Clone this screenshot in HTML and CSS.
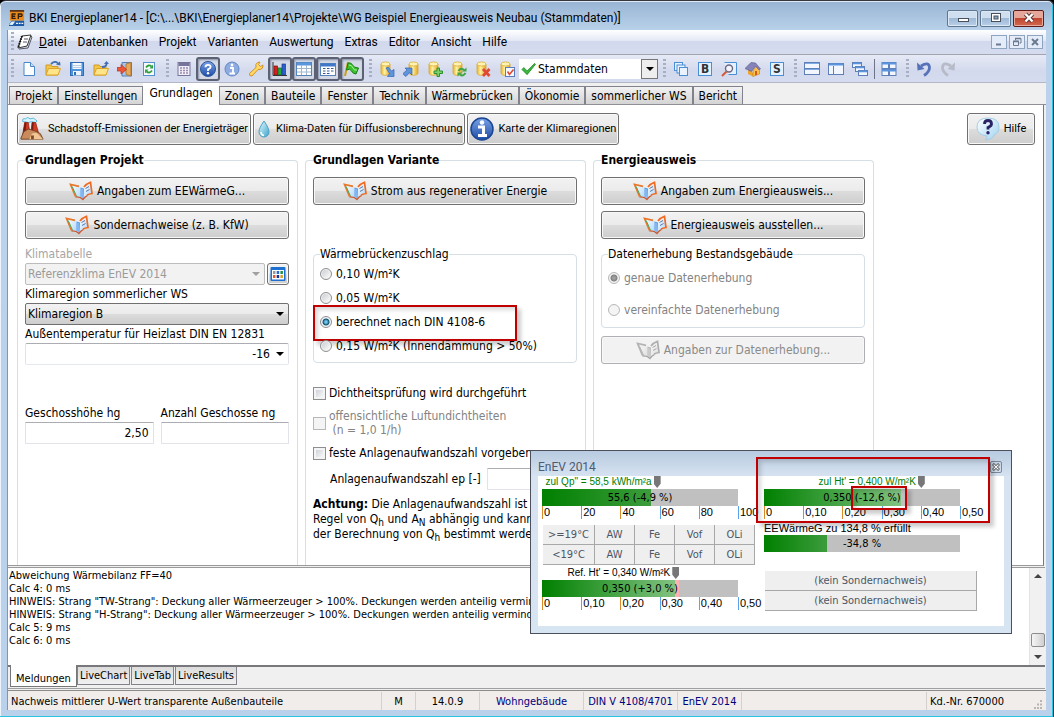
FILE: index.html
```html
<!DOCTYPE html>
<html lang="de">
<head>
<meta charset="utf-8">
<title>BKI Energieplaner14</title>
<link rel="stylesheet" href="styles.css">
</head>
<body>
<svg class="defs" aria-hidden="true">
  <defs>
    <linearGradient id="gBlue" x1="0" y1="0" x2="0" y2="1"><stop offset="0" stop-color="#7ba3e6"/><stop offset="1" stop-color="#1c4ba6"/></linearGradient>
    <linearGradient id="gYel" x1="0" y1="0" x2="1" y2="0"><stop offset="0" stop-color="#e8b530"/><stop offset=".4" stop-color="#fff0a0"/><stop offset="1" stop-color="#e2a520"/></linearGradient>
    <linearGradient id="gDrop" x1="0" y1="0" x2="1" y2="1"><stop offset="0" stop-color="#e8fbff"/><stop offset="1" stop-color="#3aa5cc"/></linearGradient>
    <linearGradient id="gBub" x1="0" y1="0" x2="1" y2="1"><stop offset="0" stop-color="#ffffff"/><stop offset="1" stop-color="#9fd4f2"/></linearGradient>
    <linearGradient id="gPage" x1="0" y1="0" x2="1" y2="1"><stop offset="0" stop-color="#ffffff"/><stop offset="1" stop-color="#a9d4fb"/></linearGradient>
  </defs>
  <symbol id="book" viewBox="0 0 24 20">
    <path d="M1.500 3.500 L10 5.500 Q12 6 12 8 L13 17.500 Q10 15 6.500 15.500 Z" fill="url(#gPage)"/>
    <path d="M6.500 15.500 L1.500 3.500 L10 5.300" fill="none" stroke="#e8772a" stroke-width="1.700"/>
    <path d="M3.200 5.500 L7.400 15" stroke="#4aa857" stroke-width="1"/>
    <path d="M14 8 Q15.500 3.500 21 1.500 L23 12.500 Q17.500 12.500 14 17.500 Z" fill="url(#gPage)"/>
    <path d="M15 6 Q17 3 21.500 1.300 L23 12.500 Q20 13 18 14" fill="none" stroke="#f2691e" stroke-width="1.700"/>
    <path d="M11.500 6.500 L15 7.500 L14.500 18 L11.500 15.500 Z" fill="#5f9fe8"/>
    <path d="M13 8 V17" stroke="#b9dafc" stroke-width=".8"/>
    <path d="M6.500 16 Q11 15.500 14 18.500 Q16 15.500 18.500 14.500" fill="none" stroke="#c9552a" stroke-width="1.300"/>
    <path d="M16.500 7.500 L20 5.500 M17 10.500 L20.500 8.500" stroke="#4a6a9a" stroke-width=".9"/>
  </symbol>
  <symbol id="db" viewBox="0 0 16 16">
    <path d="M2 3 V12 C2 15 11 15 11 12 V3 Z" fill="url(#gYel)" stroke="#d9a62b" stroke-width=".8"/>
    <ellipse cx="6.500" cy="3" rx="4.500" ry="2" fill="#fff3b4" stroke="#dcae3a" stroke-width=".8"/>
  </symbol>
  <symbol id="folder" viewBox="0 0 16 16">
    <path d="M1 14 V4 H6 L7 5.500 H13 V14 Z" fill="#f3c64a" stroke="#cf9a25"/>
    <path d="M1 14 L3.500 7.500 H15.500 L13 14 Z" fill="#ffe48a" stroke="#dba52c"/>
  </symbol>
</svg>

<div class="window">
  <header class="titlebar">
    <svg class="app-icon" viewBox="0 0 18 18" aria-hidden="true"><rect x="1" y="0" width="16" height="12" rx="1" fill="#e88a1e"/><rect x="1" y="0" width="16" height="2" fill="#5a3216"/><path d="M3.500 4.500h4M3.500 3.800v6.400M3.500 7h3.500M3.500 9.500h4M10.500 10.200V4.500h3.500q1.500 1.300 0 2.700H10.500" stroke="#301c10" stroke-width="1.500" fill="none"/><path d="M0 16 L3 12 H17 V18 H0Z" fill="#1c59a8"/><path d="M0 16.500L3 13H7L4 17Z" fill="#e8f2fc"/><path d="M8 15h2M11 15h2M14 15h2" stroke="#fff" stroke-width="1.500"/></svg>
    <h1 class="title">BKI Energieplaner14 - [C:\...\BKI\Energieplaner14\Projekte\WG Beispiel Energieausweis Neubau (Stammdaten)]</h1>
    <div class="win-buttons">
      <button class="win-btn" aria-label="Minimieren"><svg viewBox="0 0 14 12"><rect x="2.500" y="6.500" width="10" height="3" fill="#fff" stroke="#47505c"/></svg></button>
      <button class="win-btn" aria-label="Maximieren"><svg viewBox="0 0 14 12"><rect x="2.500" y="1.500" width="9" height="8" fill="#fff" stroke="#47505c"/><rect x="5" y="4" width="4" height="3" fill="#8ba5c5" stroke="#47505c"/></svg></button>
      <button class="win-btn win-close" aria-label="Schließen"><svg viewBox="0 0 14 12"><path d="M3.500 2 L10.500 9.500 M10.500 2 L3.500 9.500" stroke="#5c3434" stroke-width="4.200"/><path d="M3.500 2 L10.500 9.500 M10.500 2 L3.500 9.500" stroke="#fff" stroke-width="2.400"/></svg></button>
    </div>
  </header>

  <div class="client">
    <nav class="menubar" aria-label="Menü">
      <span class="grip"></span>
      <svg class="menu-icon" viewBox="0 0 16 16" aria-hidden="true"><path d="M5 2 L14 1 L10 12 L1 14Z" fill="#fff" stroke="#333"/><path d="M5 2 L1 14" stroke="#111" stroke-width="2" stroke-dasharray="1.500 1"/><path d="M7 5h4M6 8h4M14 2l1 1-4 11-9 1" stroke="#556" fill="none"/></svg>
      <button class="menu"><u>D</u>atei</button>
      <button class="menu">Datenbanken</button>
      <button class="menu">Projekt</button>
      <button class="menu">Varianten</button>
      <button class="menu">Auswertung</button>
      <button class="menu">Extras</button>
      <button class="menu">Editor</button>
      <button class="menu">Ansicht</button>
      <button class="menu">Hilfe</button>
      <span class="mdi">
        <button class="mdi-btn" aria-label="Fenster minimieren"><svg viewBox="0 0 10 10"><path d="M2 7.500h5" stroke="#6b7a90" stroke-width="2"/></svg></button>
        <button class="mdi-btn" aria-label="Fenster wiederherstellen"><svg viewBox="0 0 10 10"><path d="M3.500 3V1.500H9V6H7.500M1.500 4h5v4.500h-5z" fill="none" stroke="#6b7a90"/><path d="M3 1.500h6M1 4.500h6" stroke="#6b7a90" stroke-width="1.500"/></svg></button>
        <button class="mdi-btn" aria-label="Fenster schließen"><svg viewBox="0 0 10 10"><path d="M2 2l6 6M8 2L2 8" stroke="#6b7a90" stroke-width="2"/></svg></button>
      </span>
    </nav>

    <div class="toolbar" role="toolbar" aria-label="Werkzeuge">
      <span class="grip"></span>
      <button class="tool" aria-label="Neu"><svg viewBox="0 0 16 16"><path d="M3 1.500H9.500L13.500 5.500V14.500H3Z" fill="#fbfdff" stroke="#4a86c8"/><path d="M9.500 1.500V5.500H13.500" fill="#cfe2f6" stroke="#4a86c8"/></svg></button>
      <button class="tool" aria-label="Öffnen"><svg viewBox="0 0 16 16"><use href="#folder"/><path d="M6 3Q10-1 13 2.500" stroke="#3f6fae" stroke-width="1.800" fill="none"/><path d="M11 3.500L15.500 4.500 15 .500Z" fill="#3f6fae"/></svg></button>
      <button class="tool" aria-label="Speichern"><svg viewBox="0 0 16 16"><rect x="1.500" y="1.500" width="13" height="13" fill="#4d93dd" stroke="#2f6cb5"/><rect x="3.500" y="2" width="9" height="6" fill="#f6faff"/><path d="M4 4.500h8M4 6.500h8" stroke="#b9cde4"/><rect x="4" y="10" width="8" height="4.500" fill="#eef4fc"/><rect x="5" y="11" width="2" height="3" fill="#2f6cb5"/></svg></button>
      <button class="tool" aria-label="Schließen"><svg viewBox="0 0 16 16"><use href="#folder"/><path d="M9 6Q14 6 13.500 2" stroke="#3f6fae" stroke-width="1.800" fill="none"/><path d="M11 3L16 3 13.500 0Z" fill="#3f6fae"/></svg></button>
      <button class="tool" aria-label="Beenden"><svg viewBox="0 0 16 16"><path d="M5 1.500H14.500V15H5Z" fill="#a8c6e8" stroke="#5a80ae"/><path d="M9 3L14 1.500V15L9 13.500Z" fill="#e5a95a" stroke="#a8702d" stroke-width=".8"/><path d="M0 6.500H4V3.500L9.500 8.500 4 13V10H0Z" fill="#ee5638" stroke="#b82e1c" stroke-width=".7"/></svg></button>
      <button class="tool" aria-label="Aktualisieren"><svg viewBox="0 0 16 16"><rect x="2.500" y="1.500" width="11" height="13" fill="#f6faff" stroke="#5591cf"/><path d="M5 6.500Q7.500 3 10.500 5.500M11 9.500Q8.500 13 5.500 10.500" stroke="#32a03a" stroke-width="1.800" fill="none"/><path d="M12 3.500V7.500H8.500ZM4 12.500V8.500H7.500Z" fill="#32a03a"/></svg></button>
      <span class="grip"></span>
      <button class="tool" aria-label="Rechner"><svg viewBox="0 0 16 16"><rect x="2" y="1.500" width="12" height="13" fill="#f0eef8" stroke="#77749c"/><rect x="2.500" y="2" width="11" height="3" fill="#77749c"/><path d="M4 7h2M7 7h2M10 7h2M4 9.500h2M7 9.500h2M10 9.500h2M4 12h2M7 12h2M10 12h2" stroke="#9a8cae" stroke-width="1.500"/></svg></button>
      <button class="tool pressed" aria-label="Hilfe"><svg viewBox="0 0 16 16"><circle cx="8" cy="8" r="7.500" fill="url(#gBlue)" stroke="#2b569e"/><path d="M5.500 6.200Q5.500 3.800 8 3.800T10.600 6Q10.600 7.400 8 8.400V10" stroke="#fff" stroke-width="1.800" fill="none"/><circle cx="8" cy="12.200" r="1.200" fill="#fff"/></svg></button>
      <button class="tool" aria-label="Information"><svg viewBox="0 0 16 16"><circle cx="8" cy="8" r="7" fill="#8cabe0" stroke="#6587c4"/><path d="M6 7H9V12.500M5.500 12.500H11" stroke="#fff" stroke-width="1.800" fill="none"/><circle cx="8" cy="4" r="1.400" fill="#fff"/></svg></button>
      <button class="tool" aria-label="Optionen"><svg viewBox="0 0 16 16"><path d="M1.500 12.500L8 6.500Q7 3 9.500 1.500L12 1 10.500 3.500 12.500 5.500 15 4Q15.500 8 12 8.500L10 8.500 4 15Q1 15.500 1.500 12.500Z" fill="#ffd964" stroke="#d2922a"/></svg></button>
      <button class="tool pressed" aria-label="Diagramm"><svg viewBox="0 0 16 16"><rect x="2" y="5" width="3.500" height="9" fill="#d32020" stroke="#7e0d0d" stroke-width=".7"/><rect x="6" y="7" width="3.500" height="7" fill="#27a63a" stroke="#11611c" stroke-width=".7"/><rect x="10" y="3" width="3.500" height="11" fill="#2b5fd0" stroke="#173a8c" stroke-width=".7"/><path d="M1 1V14.500H15" stroke="#333" fill="none"/></svg></button>
      <button class="tool pressed" aria-label="Tabelle"><svg viewBox="0 0 16 16"><rect x=".5" y="1.500" width="15" height="13" fill="#fff" stroke="#5582b8"/><path d="M1 3h14" stroke="#5a96dc" stroke-width="3"/><path d="M1 7.500H15M1 11H15M5.500 4V14M10.500 4V14" stroke="#9fb6d0"/></svg></button>
      <button class="tool pressed" aria-label="Ergebnisse"><svg viewBox="0 0 16 16"><rect x=".5" y="2.500" width="15" height="12" fill="#fff" stroke="#5582b8"/><path d="M1 4h14" stroke="#3f78c8" stroke-width="3"/><path d="M3 7.500h2.500M7 7.500h2.500M11 7.500h2.500M3 10h2.500M7 10h2.500M11 10h2.500M3 12.500h2.500M7 12.500h2.500" stroke="#35588c"/></svg></button>
      <button class="tool pressed" aria-label="Markierung"><svg viewBox="0 0 16 16"><path d="M1 15L4 1" stroke="#c9a01c" stroke-width="2"/><path d="M4 2Q7 1 8.500 4T14.500 7L12 13Q9 13 7.500 10T2.500 9Z" fill="#3cc02c" stroke="#157c12"/><path d="M5 4Q8 4 9 7T13 9" stroke="#a6f09a" fill="none"/></svg></button>
      <span class="grip"></span>
      <button class="tool" aria-label="Datenbank exportieren"><svg viewBox="0 0 16 16"><use href="#db"/><path d="M7 7L9 6 12.500 10 15 8.500V15.500H8.500L10.500 12.500Z" fill="#5f93dc" stroke="#3366b0" stroke-width=".7"/></svg></button>
      <button class="tool" aria-label="Datenbank importieren"><svg viewBox="0 0 16 16"><use href="#db" x="4"/><path d="M1 14L0 12.500 4 9 2 7H9V14L6.500 11.500 3 15.500Z" fill="#5f93dc" stroke="#3366b0" stroke-width=".7"/></svg></button>
      <button class="tool" aria-label="Datensatz hinzufügen"><svg viewBox="0 0 16 16"><use href="#db"/><path d="M10 7h2.500v3h3v2.500h-3v3H10v-3H7V10h3Z" fill="#7cd06a" stroke="#2c9030"/></svg></button>
      <button class="tool" aria-label="Datensatz aktualisieren"><svg viewBox="0 0 16 16"><use href="#db"/><path d="M7.500 10Q10 6 13 9M14.500 12Q12 16 9 13.500" stroke="#3ca544" stroke-width="2" fill="none"/><path d="M15.500 6.500V10.500H11ZM6.500 15.500V11.500H11Z" fill="#3ca544"/></svg></button>
      <button class="tool" aria-label="Datensatz löschen"><svg viewBox="0 0 16 16"><use href="#db"/><path d="M8 8l6.500 7M14.500 8L8 15" stroke="#e04a34" stroke-width="2.800"/></svg></button>
      <button class="tool" aria-label="Datensatz prüfen"><svg viewBox="0 0 16 16"><use href="#db"/><rect x="6.500" y="6.500" width="9" height="9" fill="#f6f8ff" stroke="#5a7cbc"/><path d="M8.500 10.500l2 3 4-5" stroke="#e04a34" stroke-width="1.600" fill="none"/></svg></button>
      <div class="combo">
        <svg viewBox="0 0 16 14" aria-hidden="true"><path d="M1 7.500L3 5.500 6.500 9 14.500 1 15.500 2 6.500 13Z" fill="#3cb83c" stroke="#14801c" stroke-width=".8"/></svg>
        <select aria-label="Variante"><option>Stammdaten</option></select>
        <span class="combo-arrow"></span>
      </div>
      <span class="grip"></span>
      <button class="tool" aria-label="Kopieren"><svg viewBox="0 0 16 16"><g fill="#e8f3ff" stroke="#4a8fd6"><rect x="1.500" y="1.500" width="8" height="8"/><rect x="4" y="4" width="8" height="8"/><rect x="6.500" y="6.500" width="8" height="8"/></g></svg></button>
      <button class="tool letter" aria-label="Bauteile">B</button>
      <button class="tool" aria-label="Suchen"><svg viewBox="0 0 16 16"><path d="M3.500 1.500h12v12h-8" fill="#e4f2ff" stroke="#4a8fd6"/><circle cx="8" cy="7.500" r="3.500" fill="#f4f4fa" stroke="#6b6880" stroke-width="1.400"/><path d="M5.500 10.500L1 15" stroke="#d4583a" stroke-width="2"/></svg></button>
      <button class="tool" aria-label="Gebäude"><svg viewBox="0 0 16 16"><path d="M3 8L8 12V15.500L3 13Z" fill="#f0a428"/><path d="M8 10L11 5.500 14.500 8V13L8 15.500Z" fill="#ffc04a" stroke="#b87a20" stroke-width=".6"/><path d="M0 7.500L6 1.500 10.500 2 15.500 8 13.500 8.500 10.500 5 6.500 10.500Z" fill="#8583b8" stroke="#57557f" stroke-width=".6"/><path d="M10 10h2v4h-2z" fill="#d05a20"/></svg></button>
      <button class="tool letter" aria-label="Schichten">S</button>
      <span class="grip"></span>
      <button class="tool" aria-label="Horizontal teilen"><svg viewBox="0 0 16 16"><g fill="#f2f6ff" stroke="#5f7fb8"><rect x=".5" y="1.500" width="15" height="6"/><rect x=".5" y="7.500" width="15" height="6"/></g><path d="M1 2.500h14M1 8.500h14" stroke="#7faae6"/></svg></button>
      <button class="tool" aria-label="Vertikal teilen"><svg viewBox="0 0 16 16"><g fill="#f2f6ff" stroke="#5f7fb8"><rect x=".5" y="2.500" width="15" height="11"/><path d="M5.500 5v8"/></g><path d="M1 3.500h14" stroke="#5a96e0" stroke-width="2"/></svg></button>
      <button class="tool" aria-label="Überlappend"><svg viewBox="0 0 16 16"><g fill="#f2f6ff" stroke="#5f7fb8"><rect x=".5" y="1.500" width="9" height="5"/><rect x="3.500" y="5.500" width="9" height="5"/><rect x="6.500" y="9.500" width="9" height="5"/></g><path d="M1 2.500h8M4 6.500h8M7 10.500h8" stroke="#5a96e0" stroke-width="1.600"/></svg></button>
      <span class="sep"></span>
      <button class="tool" aria-label="Raster"><svg viewBox="0 0 16 16"><g fill="#f2f6ff" stroke="#5f7fb8"><rect x="1" y="1.500" width="6.500" height="6"/><rect x="8.500" y="1.500" width="6.500" height="6"/><rect x="1" y="8.500" width="6.500" height="6"/><rect x="8.500" y="8.500" width="6.500" height="6"/></g><path d="M1 2.500h14M1 9.500h14" stroke="#5a96e0" stroke-width="2"/></svg></button>
      <span class="grip"></span>
      <button class="tool" aria-label="Rückgängig"><svg viewBox="0 0 16 16"><path d="M5 5Q13 0 13.500 6.500 13.500 11 8 14.500" stroke="#5672b8" stroke-width="2.800" fill="none"/><path d="M1 1.500L1.500 9.500 8.500 8Z" fill="#5672b8"/></svg></button>
      <button class="tool" aria-label="Wiederholen"><svg viewBox="0 0 16 16"><path d="M11 5Q3 0 2.500 6.500 2.500 11 8 14.500" stroke="#b7bbc8" stroke-width="2.800" fill="none"/><path d="M15 1.500L14.500 9.500 7.500 8Z" fill="#b7bbc8"/></svg></button>
    </div>

    <div class="tabs" role="tablist">
      <button role="tab" class="tab">Projekt</button>
      <button role="tab" class="tab">Einstellungen</button>
      <button role="tab" class="tab active" aria-selected="true">Grundlagen</button>
      <button role="tab" class="tab">Zonen</button>
      <button role="tab" class="tab">Bauteile</button>
      <button role="tab" class="tab">Fenster</button>
      <button role="tab" class="tab">Technik</button>
      <button role="tab" class="tab">Wärmebrücken</button>
      <button role="tab" class="tab">Ökonomie</button>
      <button role="tab" class="tab">sommerlicher WS</button>
      <button role="tab" class="tab">Bericht</button>
    </div>

    <main class="page">
      <div class="quick">
        <button class="btn big"><svg class="i26" viewBox="0 0 26 26" aria-hidden="true"><path d="M3 5Q2 1 6 2 8-1 11 2 15 0 17 3 20 4 17 6L13 5 9 6 5 5Z" fill="#d6f3fc" stroke="#55b5dc"/><path d="M5 6H9L11 19H3Z" fill="#d23c22" stroke="#7c1a10" stroke-width=".7"/><path d="M13 6H17L20 17H12Z" fill="#d23c22" stroke="#7c1a10" stroke-width=".7"/><path d="M5 6h2L6 18H3ZM13 6h2l-1 11h-2z" fill="#7c1a10"/><path d="M1 23L4 16 9 13 16 15 22 18 25 24H1Z" fill="#c98a5c" stroke="#6e4024"/><path d="M10 24L13 18 18 17 25 24Z" fill="#f2c594"/><path d="M12 20h3v4h-3z" fill="#7b4a2c"/></svg>Schadstoff-Emissionen der Energieträger</button>
        <button class="btn big"><svg class="drop" viewBox="0 0 12 18" aria-hidden="true"><path d="M6 1Q11 8 11 12A5 5 0 0 1 1 12Q1 8 6 1Z" fill="url(#gDrop)" stroke="#4d9fc4"/><path d="M3 12Q3 15 6 15.500" stroke="#fff" fill="none" stroke-width="1.500"/></svg>Klima-Daten für Diffusionsberechnung</button>
        <button class="btn big"><svg class="i26" viewBox="0 0 24 24" aria-hidden="true"><circle cx="12" cy="12" r="11" fill="url(#gBlue)" stroke="#1b4693" stroke-width="1.500"/><path d="M8 10H13.500V18M8 18.500H17" stroke="#fff" stroke-width="3" fill="none"/><circle cx="12" cy="5.500" r="2.200" fill="#fff"/></svg>Karte der Klimaregionen</button>
        <button class="btn big help"><svg class="i26" viewBox="0 0 24 24" aria-hidden="true"><path d="M12 1Q23 1 23 10 23 16 18 18 17 22 9 23 12 21 11 19 1 18 1 10 1 1 12 1Z" fill="url(#gBub)" stroke="#a5cfe6"/><path d="M8.500 7Q8.500 3.500 12 3.500T15.500 7Q15.500 9 12 10.500V12.500" stroke="#2a2466" stroke-width="2.800" fill="none"/><circle cx="12" cy="15.800" r="1.700" fill="#2a2466"/></svg>Hilfe</button>
      </div>

      <div class="groups">
        <fieldset class="group">
          <legend class="group-title">Grundlagen Projekt</legend>
          <div class="stack">
            <button class="btn wide"><svg class="book" aria-hidden="true"><use href="#book"/></svg>Angaben zum EEWärmeG...</button>
            <button class="btn wide"><svg class="book" aria-hidden="true"><use href="#book"/></svg>Sondernachweise (z. B. KfW)</button>
          </div>
          <div class="form">
            <label class="lbl off" for="klima">Klimatabelle</label>
            <div class="row">
              <span class="drop-field disabled"><select id="klima" disabled><option>Referenzklima EnEV 2014</option></select></span>
              <button class="btn mini" aria-label="Klimatabelle wählen"><svg viewBox="0 0 16 14"><rect x=".5" y="0" width="15" height="14" rx="1" fill="#1d6fd0"/><rect x="2" y="3" width="12" height="9.500" fill="#fff"/><path d="M3 5.500h2.500" stroke="#999" stroke-width="3"/><path d="M6.700 5.500h2.500" stroke="#2c66d0" stroke-width="3"/><path d="M10.400 5.500h2.500" stroke="#1e9440" stroke-width="3"/><path d="M3 9.500h2.500" stroke="#e05a32" stroke-width="3"/><path d="M6.700 9.500h2.500" stroke="#17308c" stroke-width="3"/><path d="M10.400 9.500h2.500" stroke="#d8a21c" stroke-width="3"/></svg></button>
            </div>
            <label class="lbl" for="region">Klimaregion sommerlicher WS</label>
            <span class="drop-field"><select id="region"><option>Klimaregion B</option></select></span>
            <label class="lbl" for="temp">Außentemperatur für Heizlast DIN EN 12831</label>
            <span class="drop-field edit"><input id="temp" value="-16"></span>
          </div>
          <div class="pair">
            <div class="form"><label class="lbl" for="hg">Geschosshöhe hg</label><input class="field" id="hg" value="2,50"></div>
            <div class="form"><label class="lbl" for="ng">Anzahl Geschosse ng</label><input class="field" id="ng"></div>
          </div>
        </fieldset>

        <fieldset class="group">
          <legend class="group-title">Grundlagen Variante</legend>
          <div class="stack">
            <button class="btn wide"><svg class="book" aria-hidden="true"><use href="#book"/></svg>Strom aus regenerativer Energie</button>
            <div class="spacer"></div>
          </div>
          <fieldset class="sub">
            <legend>Wärmebrückenzuschlag</legend>
            <label class="opt"><input type="radio" name="wb">0,10 W/m²K</label>
            <label class="opt"><input type="radio" name="wb">0,05 W/m²K</label>
            <label class="opt marked"><input type="radio" name="wb" checked>berechnet nach DIN 4108-6</label>
            <label class="opt"><input type="radio" name="wb">0,15 W/m²K (Innendämmung &gt; 50%)</label>
          </fieldset>
          <div class="checks">
            <label class="opt"><input type="checkbox">Dichtheitsprüfung wird durchgeführt</label>
            <label class="opt off two"><input type="checkbox" disabled><span>offensichtliche Luftundichtheiten<br>&nbsp;(n = 1,0 1/h)</span></label>
            <label class="opt"><input type="checkbox">feste Anlagenaufwandszahl vorgeben</label>
            <div class="row ep"><label for="ep">Anlagenaufwandszahl ep [-]</label><input class="field" id="ep"></div>
          </div>
          <p class="note"><b>Achtung:</b> Die Anlagenaufwandszahl ist in<br>Regel von Q<sub>h</sub> und A<sub>N</sub> abhängig und kann<br>der Berechnung von Q<sub>h</sub> bestimmt werden</p>
        </fieldset>

        <fieldset class="group">
          <legend class="group-title">Energieausweis</legend>
          <div class="stack">
            <button class="btn wide"><svg class="book" aria-hidden="true"><use href="#book"/></svg>Angaben zum Energieausweis...</button>
            <button class="btn wide"><svg class="book" aria-hidden="true"><use href="#book"/></svg>Energieausweis ausstellen...</button>
          </div>
          <fieldset class="sub loose">
            <legend>Datenerhebung Bestandsgebäude</legend>
            <label class="opt off"><input type="radio" name="de" disabled checked>genaue Datenerhebung</label>
            <label class="opt off"><input type="radio" name="de" disabled>vereinfachte Datenerhebung</label>
          </fieldset>
          <button class="btn wide" disabled><svg class="book" aria-hidden="true"><use href="#book"/></svg>Angaben zur Datenerhebung...</button>
        </fieldset>
      </div>
    </main>

    <section class="log" aria-label="Meldungen">
      <div class="log-text">
        <p>Abweichung Wärmebilanz FF=40</p>
        <p>Calc 4: 0 ms</p>
        <p>HINWEIS: Strang "TW-Strang": Deckung aller Wärmeerzeuger &gt; 100%. Deckungen werden anteilig vermindert</p>
        <p>HINWEIS: Strang "H-Strang": Deckung aller Wärmeerzeuger &gt; 100%. Deckungen werden anteilig vermindert</p>
        <p>Calc 5: 9 ms</p>
        <p>Calc 6: 0 ms</p>
      </div>
      <div class="scroll" aria-hidden="true"><span class="up"></span><span class="thumb"></span><span class="down"></span></div>
    </section>

    <div class="log-tabs" role="tablist">
      <button role="tab" class="ltab active" aria-selected="true">Meldungen</button>
      <button role="tab" class="ltab">LiveChart</button>
      <button role="tab" class="ltab">LiveTab</button>
      <button role="tab" class="ltab">LiveResults</button>
    </div>

    <footer class="status">
      <span class="cell">Nachweis mittlerer U-Wert transparente Außenbauteile</span>
      <span class="cell mid">M</span>
      <span class="cell mid">14.0.9</span>
      <span class="cell mid navy">Wohngebäude</span>
      <span class="cell mid navy">DIN V 4108/4701</span>
      <span class="cell mid navy">EnEV 2014</span>
      <span class="cell"></span>
      <span class="cell">Kd.-Nr. 670000</span>
      <svg class="sizer" viewBox="0 0 10 10" aria-hidden="true"><path d="M8 1h2M5 4.500h2M8 4.500h2M2 8h2M5 8h2M8 8h2" stroke="#b9b5b3" stroke-width="2"/></svg>
    </footer>
  </div>

  <aside class="float" aria-label="EnEV 2014">
    <div class="float-head"><span>EnEV 2014</span><button class="float-close" aria-label="Schließen"><svg viewBox="0 0 8 8"><path d="M1 1l6 6M7 1L1 7" stroke="#444" stroke-width="2.600"/><path d="M1.500 1.500l5 5M6.500 1.500l-5 5" stroke="#fff" stroke-width="1.100"/></svg></button></div>
    <div class="float-body">
      <div class="col">
        <div class="gauge">
          <div class="limit green"><span style="width:58.5%">zul Qp" = 58,5 kWh/m²a<i class="pin"></i></span></div>
          <div class="bar"><i class="fill" style="width:55.6%"></i><b>55,6 (-4,9 %)</b></div>
          <div class="scale"><span>0</span><span>20</span><span>40</span><span>60</span><span>80</span><span>100</span></div>
        </div>
        <div class="keys">
          <button>&gt;=19°C</button><button>AW</button><button>Fe</button><button>Vof</button><button>OLi</button>
          <button>&lt;19°C</button><button>AW</button><button>Fe</button><button>Vof</button><button>OLi</button>
        </div>
        <div class="gauge">
          <div class="limit"><span style="width:68%">Ref. Ht' = 0,340 W/m²K<i class="pin"></i></span></div>
          <div class="bar"><i class="fill light" style="width:68%"></i><i class="over" style="width:2%"></i><b>0,350 (+3,0 %)</b></div>
          <div class="scale"><span>0</span><span>0,10</span><span>0,20</span><span>0,30</span><span>0,40</span><span>0,50</span></div>
        </div>
      </div>
      <div class="col">
        <div class="gauge">
          <div class="limit green"><span style="width:80%">zul Ht' = 0,400 W/m²K<i class="pin"></i></span></div>
          <div class="bar"><i class="fill light" style="width:70%"></i><b>0,350 (-12,6 %)</b></div>
          <div class="scale"><span>0</span><span>0,10</span><span>0,20</span><span>0,30</span><span>0,40</span><span>0,50</span></div>
        </div>
        <div class="gauge renew">
          <div class="caption">EEWärmeG zu 134,8 % erfüllt</div>
          <div class="bar"><i class="fill" style="width:32%"></i><b>-34,8 %</b></div>
        </div>
        <div class="proofs"><button>(kein Sondernachweis)</button><button>(kein Sondernachweis)</button></div>
      </div>
    </div>
    <span class="mark mark-big"></span>
    <span class="mark mark-small"></span>
  </aside>
</div>
</body>
</html>
```
FILE: styles.css
```css
* { box-sizing: border-box; }
body { margin: 0; background: #000; font: 12px/14px "DejaVu Sans Condensed", "DejaVu Sans", sans-serif; color: #000; }
button, input, select { font: inherit; color: inherit; margin: 0; padding: 0; }
button { border: 0; background: none; }
p { margin: 0; }
.defs { position: absolute; width: 0; height: 0; }

/* window frame */
.window { position: relative; height: 100vh; display: flex; flex-direction: column; padding: 0 7px; border: solid #35353d; border-width: 1px 1px 0 0; border-radius: 6px 6px 0 0; background: linear-gradient(90deg, #eef4fb 1px, transparent 1px, transparent calc(100% - 1px), #2cc3e0 calc(100% - 1px)), linear-gradient(#98b4d3, #bad2eb 30px, #b9d1ea); box-shadow: inset 0 1px 0 #dfeaf6, inset 0 -1px 0 #2cc3e0; }
.titlebar { display: flex; align-items: center; gap: 4px; height: 29px; padding: 5px 2px 0 2px; flex: none; }
.app-icon { width: 16px; height: 18px; flex: none; }
.title { flex: 1; margin: 0; font: 12px/16px Roboto, sans-serif; white-space: nowrap; overflow: hidden; }
.win-buttons { display: flex; gap: 2px; }
.win-btn { width: 31px; height: 17px; border: 1px solid #5f7690; border-radius: 2px; background: linear-gradient(#cfdfef 45%, #9fb9d5 50%, #b9d0e8); box-shadow: inset 0 0 0 1px #dce9f5; display: grid; place-items: center; }
.win-btn svg { width: 14px; height: 12px; }
.win-close { border-color: #5e1c1c; background: linear-gradient(#e6a79b 45%, #c2452f 50%, #cf6a50); box-shadow: inset 0 0 0 1px #e9a99a; }
.client { flex: 1; min-height: 0; display: flex; flex-direction: column; background: #f0f0f0; border-left: 1px solid #8a93a0; margin-bottom: 7px; }

/* menu and toolbar */
.menubar { display: flex; align-items: center; height: 25px; flex: none; font: 12px/16px Roboto, sans-serif; padding: 0 3px; background: linear-gradient(#fff, #e4e8f5 45%, #d3d9ed 46%, #d6dcef); border-bottom: 1px solid #a2a5b0; }
.menu { padding: 0 5px; margin-right: 1px; white-space: nowrap; }
.grip { width: 3px; height: 20px; flex: none; margin: 0 3px 0 5px; background: repeating-linear-gradient(#a9afc2 0 2px, transparent 2px 4px); }
.grip:first-child { margin-left: 0; }
.menu-icon { width: 16px; height: 16px; flex: none; margin-right: 1px; }
.mdi { margin-left: auto; display: flex; gap: 2px; }
.mdi-btn { width: 16px; height: 14px; border: 1px solid #8ea5c2; background: #e3ecf8; display: grid; place-items: center; }
.mdi-btn svg { width: 10px; height: 10px; }
.toolbar { display: flex; align-items: center; height: 28px; flex: none; padding: 0 3px; background: linear-gradient(#e6eaf6, #d3d9ed 60%, #d6dcef); border-bottom: 1px solid #b4b8c6; }
.tool { width: 24px; height: 24px; flex: none; display: grid; place-items: center; border-radius: 3px; }
.tool svg { width: 16px; height: 16px; }
.tool.pressed { border: 2px solid #5c6274; background: #d4d9e6; box-shadow: inset 1px 1px 2px #8b91a6; }
.tool.letter { width: 14px; height: 14px; margin: 0 5px; border: 1px solid #4a8fd6; border-radius: 0; background: #e4f2ff; color: #333; font: bold 12px/12px "DejaVu Sans Condensed", sans-serif; }
.sep { width: 1px; height: 20px; flex: none; margin: 0 2px; background: #70748a; }
.combo { display: flex; align-items: center; height: 20px; width: 139px; padding-left: 2px; background: #fff; }
.combo svg { width: 15px; height: 14px; margin-right: 2px; flex: none; }
.combo select { appearance: none; flex: 1; min-width: 0; border: 0; background: none; }
.combo-arrow { width: 17px; height: 20px; border: 1px solid #777; background: #eee; display: grid; place-items: center; }
.combo-arrow::after, .drop-field::after { content: ""; border: 4px solid transparent; border-top-color: #000; border-bottom: 0; }

/* page tabs */
.tabs { display: flex; align-items: flex-end; flex: none; height: 22px; padding-left: 1px; box-shadow: inset 0 -1px #8f8f98; }
.tab { height: 19px; padding: 0 5px; line-height: 16px; white-space: nowrap; border: 1px solid #82828c; border-bottom-color: #8f8f98; background: linear-gradient(#f2f2f2, #d4d4d4); }
.tab.active { height: 22px; padding: 0 6px 2px; border: 0; background: #fff; }
.page { flex: 1; min-height: 0; overflow: hidden; margin-right: 2px; padding: 8px 8px 0 9px; display: flex; flex-direction: column; gap: 8px; background: #fff; border-right: 1px solid #777784; border-bottom: 1px solid #9a9a9a; }

/* buttons */
.btn { display: inline-flex; align-items: center; justify-content: center; gap: 4px; border: 1px solid #707070; border-radius: 3px; background: linear-gradient(#f2f2f2, #ebebeb 48%, #dcdcdc 52%, #cdcdcd); box-shadow: inset 0 0 0 1px #f8f8f8; white-space: nowrap; }
.btn:disabled { border-color: #aeb0b3; background: #f2f2f2; color: #8a8a8a; }
.btn:disabled svg { filter: grayscale(1) opacity(.6); }
.big { height: 32px; padding: 0 2px; font: 11px/14px Roboto, sans-serif; }
.help { width: 68px; margin-left: auto; }
.i26 { width: 24px; height: 24px; flex: none; }
.drop { width: 12px; height: 18px; margin: 0 2px; }
.wide { width: 100%; height: 28px; }
.book { width: 24px; height: 20px; }
.mini { width: 22px; height: 22px; flex: none; }
.mini svg { width: 16px; height: 14px; }
.quick { display: flex; gap: 2px; flex: none; }

/* groups */
.groups { flex: 1; display: grid; grid-template-columns: repeat(3, 281px); gap: 7px; }
.group { min-width: 0; margin: 0; padding: 10px 8px 0 7px; border: 1px solid #d5dfe5; border-bottom: 0; border-radius: 4px 4px 0 0; }
.group-title { padding: 0; font-weight: bold; }
.stack { display: flex; flex-direction: column; gap: 6px; }
.spacer { height: 28px; }
.form { display: flex; flex-direction: column; }
.stack + .form { padding-top: 6px; }
.lbl { line-height: 18px; white-space: nowrap; }
.off { color: #838383; }
.lbl.off { color: #a5a5a5; }
.row { display: flex; gap: 2px; }
.drop-field { position: relative; display: flex; flex: 1; align-items: center; height: 22px; min-height: 22px; padding: 0 4px 0 2px; border: 1px solid #707070; border-radius: 2px; background: linear-gradient(#f2f2f2, #ebebeb 48%, #dcdcdc 52%, #cdcdcd); }
.drop-field select, .drop-field input { appearance: none; flex: 1; min-width: 0; border: 0; background: none; outline: 0; }
.drop-field.disabled { border-color: #bcbcbc; background: #f2f2f2; }
.drop-field.disabled::after { border-top-color: #a0a0a0; }
.drop-field select:disabled { color: #9a9a9a; opacity: 1; }
.drop-field.edit { background: #fff; border-color: #abadb3 #e2e3ea #e3e9ef; }
.edit input { text-align: right; padding-right: 6px; }
.pair { display: grid; grid-template-columns: 1fr 1fr; gap: 7px; margin-top: 39px; }
.field { height: 22px; width: 100%; padding: 0 4px; text-align: right; border: 1px solid #e2e3ea; border-top-color: #abadb3; border-radius: 1px; background: #fff; }
.sub { min-width: 0; margin: 8px 0 0; padding: 1px 6px 4px; border: 1px solid #d5dfe5; border-radius: 4px; }
.sub legend { padding: 0; }
.opt { position: relative; display: flex; align-items: center; gap: 4px; height: 24px; white-space: nowrap; }
.loose { padding-bottom: 1px; margin-bottom: 8px; }
.loose .opt { height: 32px; }
.opt input { appearance: none; width: 12px; height: 12px; flex: none; border: 1px solid #8e8f8f; background: linear-gradient(135deg, #c3c8cf, #f6f6f6 80%); box-shadow: inset 0 0 0 1px #f4f4f4; }
.opt input[type="radio"] { border-radius: 50%; }
.opt input[type="checkbox"] { width: 13px; height: 13px; box-shadow: inset 0 0 0 2px #f4f4f4; }
.opt input:checked { background: radial-gradient(circle, #6fc8f0 0 1px, #15506e 3px, #e8f2f8 4px); }
.opt input:disabled { border-color: #b8b8b8; background: #f4f4f4; }
.opt input:disabled:checked { background: radial-gradient(circle, #a0a0a0 0 1px, #808080 3px, #f0f0f0 4px); }
.marked::before { content: ""; position: absolute; left: -7px; top: -5px; width: 200px; height: 32px; border: 2px solid #c00000; box-shadow: 4px 4px 4px rgba(0, 0, 0, .2), inset 3px 3px 4px rgba(0, 0, 0, .15); }
.checks { padding-top: 18px; }
.checks .opt { gap: 3px; }
.checks .two { height: 36px; }
.ep { align-items: center; padding: 3px 0 0 17px; gap: 6px; white-space: nowrap; }
.ep .field { flex: 1; min-width: 0; }
.note { margin-top: 7px; line-height: 15px; white-space: nowrap; }
.note sub { font-size: 10px; line-height: 1px; }

/* message log */
.log { display: flex; flex: none; height: 100px; margin-top: 1px; margin-right: 1px; background: #fff; border-top: 1px solid #9a9a9a; border-bottom: 2px solid #77777c; font-size: 11px; line-height: 13px; }
.log-text { flex: 1; min-width: 0; padding: 1px; white-space: nowrap; overflow: hidden; }
.scroll { width: 16px; display: flex; flex-direction: column; align-items: center; background: #f1f1f1; border-left: 1px solid #e3e3e3; }
.up, .down { border: 4px solid transparent; margin: 6px 0; }
.up { border-bottom-color: #444; border-top: 0; margin-bottom: auto; }
.down { border-top-color: #444; border-bottom: 0; margin-top: 8px; }
.thumb { width: 14px; height: 14px; border: 1px solid #8c8c8c; border-radius: 2px; background: linear-gradient(90deg, #f5f5f5, #cfcfcf); }
.log-tabs { display: flex; align-items: flex-start; flex: none; height: 22px; margin-right: 1px; border-bottom: 1px solid #a0a0a0; padding: 0 0 0 2px; font-size: 11px; }
.ltab { height: 18px; padding: 0 2px; line-height: 17px; border: solid #82828c; border-width: 0 1px 1px; background: linear-gradient(#dcdcdc, #f0f0f0); margin-right: 1px; }
.ltab.active { height: 22px; margin: -2px 0 0; padding: 5px 5px 0; background: #fff; border-color: #777; }
.status { display: grid; grid-template-columns: 373fr 34px 64px 104px 94px 64px 185fr 106px 14px; align-items: center; flex: none; height: 20px; border-top: 1px solid #8b8b8b; background: #f0edeb; font-size: 11px; margin-top: 1px; }
.cell { height: 18px; line-height: 19px; padding: 0 3px; white-space: nowrap; overflow: hidden; }
.cell + .cell { border-left: 1px solid #d4d0cd; }
.cell.mid { padding: 0; text-align: center; }
.navy { color: #00007c; }
.sizer { width: 10px; height: 10px; align-self: end; }

/* floating indicator window */
.float { position: absolute; left: 530px; top: 449px; width: 482px; height: 184px; padding: 0 7px 7px; display: flex; flex-direction: column; border: 1px solid #4d505c; background: linear-gradient(#b8cbe0, #d7e3f1 26px, #d7e4f2); }
.float-head { display: flex; align-items: center; justify-content: space-between; height: 25px; padding: 7px 2px 0 0; color: #4d5a70; font: 12px/14px Roboto, sans-serif; }
.float-close { width: 12px; height: 12px; border: 1px solid #7c8798; border-radius: 2px; display: grid; place-items: center; }
.float-close svg { width: 8px; height: 8px; }
.float-body { flex: 1; min-height: 0; background: #fff; display: grid; grid-template-columns: 196px 196px; column-gap: 26px; padding-left: 4px; font-size: 11px; }
.limit { height: 13px; font: 10px/12px "Liberation Sans", Arial, sans-serif; white-space: nowrap; }
.limit span { display: flex; justify-content: flex-end; gap: 2px; }
.green { color: #007d00; }
.pin { width: 7px; height: 12px; flex: none; margin-right: -4px; background: #777; clip-path: polygon(0 0, 100% 0, 100% 65%, 50% 100%, 0 65%); }
.bar { position: relative; display: flex; height: 17px; background: #c0c0c0; }
.fill { background: linear-gradient(90deg, #008000, #3c9c3c); }
.fill.light { background: linear-gradient(90deg, #008000, #82c282); }
.over { background: #ffb0b0; }
.bar b { position: absolute; inset: 0; text-align: center; font-weight: normal; line-height: 18px; }
.scale { display: grid; grid-template-columns: repeat(6, 20%); height: 13px; font: 11px/12px "Liberation Sans", Arial, sans-serif; }
.scale span { border-left: 1px solid #d98a2b; padding-left: 1px; white-space: nowrap; }
.scale span:nth-child(even) { border-color: #5aa2ea; }
.keys { display: grid; grid-template-columns: 52px repeat(4, 40px); margin: 6px -16px 2px 1px; }
.keys button, .proofs button { height: 20px; background: #efefef; color: #4c5664; border: solid #a8a8a8; border-width: 0 1px 1px 0; white-space: nowrap; }
.caption { height: 14px; font: 11px/14px "Liberation Sans", Arial, sans-serif; }
.renew { margin-top: 2px; }
.proofs { display: flex; flex-direction: column; margin: 19px -17px 0 1px; }
.mark { position: absolute; border: 2px solid #c00000; box-shadow: 4px 4px 4px rgba(0, 0, 0, .2), inset 3px 3px 4px rgba(0, 0, 0, .15); pointer-events: none; }
.mark-big { left: 225px; top: 6px; width: 234px; height: 66px; }
.mark-small { left: 320px; top: 35px; width: 56px; height: 24px; }
```
